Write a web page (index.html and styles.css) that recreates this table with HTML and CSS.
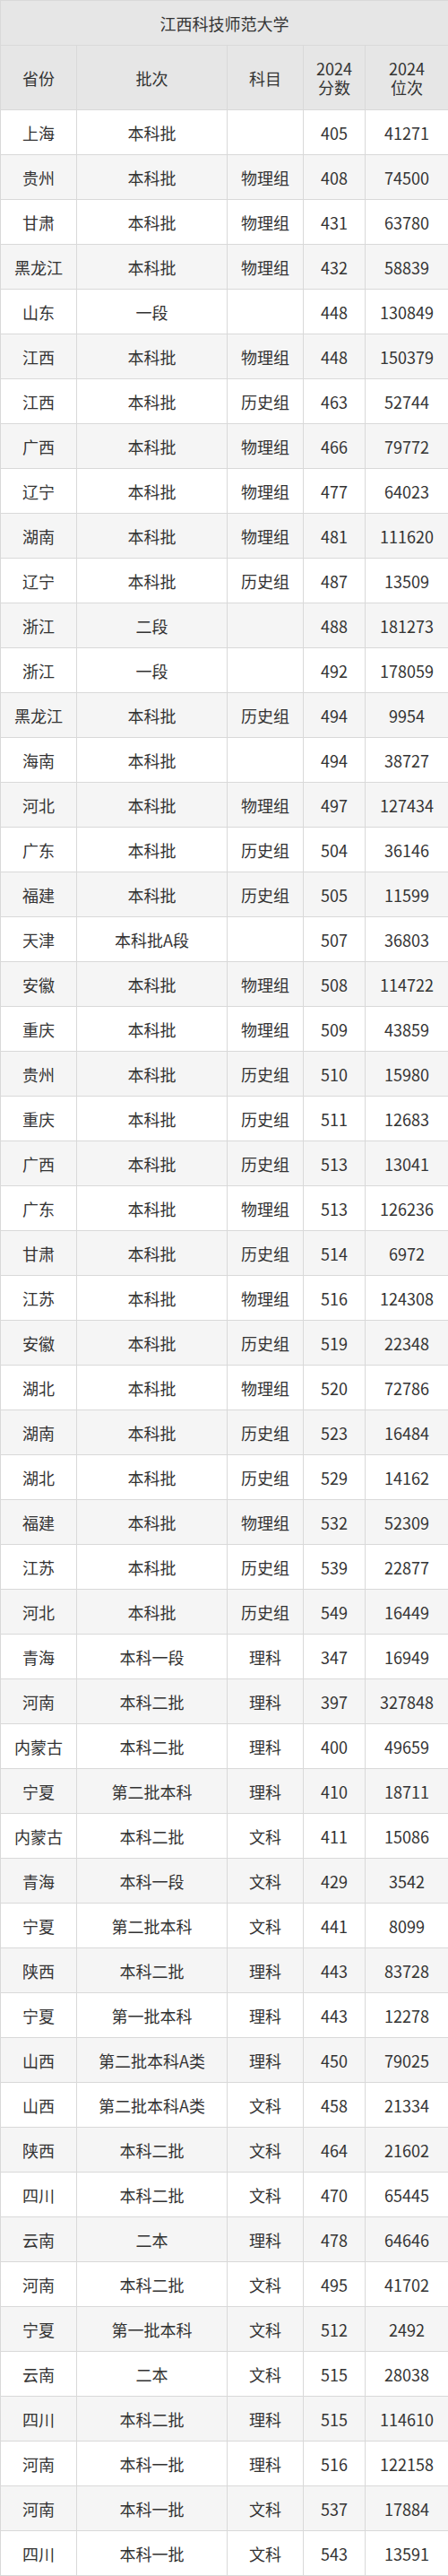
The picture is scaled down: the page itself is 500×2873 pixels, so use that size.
FILE: index.html
```html
<!DOCTYPE html>
<html lang="zh">
<head>
<meta charset="utf-8">
<title>江西科技师范大学</title>
<link rel="stylesheet" href="styles.css">
</head>
<body>
<table class="score-table">
<colgroup>
<col class="c-prov"><col class="c-batch"><col class="c-subj"><col class="c-score"><col class="c-rank">
</colgroup>
<thead>
<tr class="title-row"><th colspan="5">江西科技师范大学</th></tr>
<tr class="head-row"><th>省份</th><th>批次</th><th>科目</th><th><span class="hl">2024</span><span class="hl">分数</span></th><th><span class="hl">2024</span><span class="hl">位次</span></th></tr>
</thead>
<tbody>
<tr><td>上海</td><td>本科批</td><td></td><td>405</td><td>41271</td></tr>
<tr><td>贵州</td><td>本科批</td><td>物理组</td><td>408</td><td>74500</td></tr>
<tr><td>甘肃</td><td>本科批</td><td>物理组</td><td>431</td><td>63780</td></tr>
<tr><td>黑龙江</td><td>本科批</td><td>物理组</td><td>432</td><td>58839</td></tr>
<tr><td>山东</td><td>一段</td><td></td><td>448</td><td>130849</td></tr>
<tr><td>江西</td><td>本科批</td><td>物理组</td><td>448</td><td>150379</td></tr>
<tr><td>江西</td><td>本科批</td><td>历史组</td><td>463</td><td>52744</td></tr>
<tr><td>广西</td><td>本科批</td><td>物理组</td><td>466</td><td>79772</td></tr>
<tr><td>辽宁</td><td>本科批</td><td>物理组</td><td>477</td><td>64023</td></tr>
<tr><td>湖南</td><td>本科批</td><td>物理组</td><td>481</td><td>111620</td></tr>
<tr><td>辽宁</td><td>本科批</td><td>历史组</td><td>487</td><td>13509</td></tr>
<tr><td>浙江</td><td>二段</td><td></td><td>488</td><td>181273</td></tr>
<tr><td>浙江</td><td>一段</td><td></td><td>492</td><td>178059</td></tr>
<tr><td>黑龙江</td><td>本科批</td><td>历史组</td><td>494</td><td>9954</td></tr>
<tr><td>海南</td><td>本科批</td><td></td><td>494</td><td>38727</td></tr>
<tr><td>河北</td><td>本科批</td><td>物理组</td><td>497</td><td>127434</td></tr>
<tr><td>广东</td><td>本科批</td><td>历史组</td><td>504</td><td>36146</td></tr>
<tr><td>福建</td><td>本科批</td><td>历史组</td><td>505</td><td>11599</td></tr>
<tr><td>天津</td><td>本科批A段</td><td></td><td>507</td><td>36803</td></tr>
<tr><td>安徽</td><td>本科批</td><td>物理组</td><td>508</td><td>114722</td></tr>
<tr><td>重庆</td><td>本科批</td><td>物理组</td><td>509</td><td>43859</td></tr>
<tr><td>贵州</td><td>本科批</td><td>历史组</td><td>510</td><td>15980</td></tr>
<tr><td>重庆</td><td>本科批</td><td>历史组</td><td>511</td><td>12683</td></tr>
<tr><td>广西</td><td>本科批</td><td>历史组</td><td>513</td><td>13041</td></tr>
<tr><td>广东</td><td>本科批</td><td>物理组</td><td>513</td><td>126236</td></tr>
<tr><td>甘肃</td><td>本科批</td><td>历史组</td><td>514</td><td>6972</td></tr>
<tr><td>江苏</td><td>本科批</td><td>物理组</td><td>516</td><td>124308</td></tr>
<tr><td>安徽</td><td>本科批</td><td>历史组</td><td>519</td><td>22348</td></tr>
<tr><td>湖北</td><td>本科批</td><td>物理组</td><td>520</td><td>72786</td></tr>
<tr><td>湖南</td><td>本科批</td><td>历史组</td><td>523</td><td>16484</td></tr>
<tr><td>湖北</td><td>本科批</td><td>历史组</td><td>529</td><td>14162</td></tr>
<tr><td>福建</td><td>本科批</td><td>物理组</td><td>532</td><td>52309</td></tr>
<tr><td>江苏</td><td>本科批</td><td>历史组</td><td>539</td><td>22877</td></tr>
<tr><td>河北</td><td>本科批</td><td>历史组</td><td>549</td><td>16449</td></tr>
<tr><td>青海</td><td>本科一段</td><td>理科</td><td>347</td><td>16949</td></tr>
<tr><td>河南</td><td>本科二批</td><td>理科</td><td>397</td><td>327848</td></tr>
<tr><td>内蒙古</td><td>本科二批</td><td>理科</td><td>400</td><td>49659</td></tr>
<tr><td>宁夏</td><td>第二批本科</td><td>理科</td><td>410</td><td>18711</td></tr>
<tr><td>内蒙古</td><td>本科二批</td><td>文科</td><td>411</td><td>15086</td></tr>
<tr><td>青海</td><td>本科一段</td><td>文科</td><td>429</td><td>3542</td></tr>
<tr><td>宁夏</td><td>第二批本科</td><td>文科</td><td>441</td><td>8099</td></tr>
<tr><td>陕西</td><td>本科二批</td><td>理科</td><td>443</td><td>83728</td></tr>
<tr><td>宁夏</td><td>第一批本科</td><td>理科</td><td>443</td><td>12278</td></tr>
<tr><td>山西</td><td>第二批本科A类</td><td>理科</td><td>450</td><td>79025</td></tr>
<tr><td>山西</td><td>第二批本科A类</td><td>文科</td><td>458</td><td>21334</td></tr>
<tr><td>陕西</td><td>本科二批</td><td>文科</td><td>464</td><td>21602</td></tr>
<tr><td>四川</td><td>本科二批</td><td>文科</td><td>470</td><td>65445</td></tr>
<tr><td>云南</td><td>二本</td><td>理科</td><td>478</td><td>64646</td></tr>
<tr><td>河南</td><td>本科二批</td><td>文科</td><td>495</td><td>41702</td></tr>
<tr><td>宁夏</td><td>第一批本科</td><td>文科</td><td>512</td><td>2492</td></tr>
<tr><td>云南</td><td>二本</td><td>文科</td><td>515</td><td>28038</td></tr>
<tr><td>四川</td><td>本科二批</td><td>理科</td><td>515</td><td>114610</td></tr>
<tr><td>河南</td><td>本科一批</td><td>理科</td><td>516</td><td>122158</td></tr>
<tr><td>河南</td><td>本科一批</td><td>文科</td><td>537</td><td>17884</td></tr>
<tr><td>四川</td><td>本科一批</td><td>文科</td><td>543</td><td>13591</td></tr>
</tbody>
</table>
</body>
</html>
```

FILE: styles.css
```css
html, body {
  margin: 0;
  padding: 0;
  background: #ffffff;
}

.score-table {
  width: 500px;
  border-collapse: collapse;
  table-layout: fixed;
  font-family: "Noto Sans CJK SC", "Noto Sans", sans-serif;
  font-size: 18px;
  color: #333333;
}

.c-prov { width: 85px; }
.c-batch { width: 168px; }
.c-subj { width: 85px; }
.c-score { width: 69px; }
.c-rank { width: 93px; }

.score-table th,
.score-table td {
  border: 1px solid #d9d9d9;
  text-align: center;
  vertical-align: middle;
  padding: 0;
  font-weight: normal;
  line-height: 24px;
}

.hl {
  display: block;
  line-height: 21px;
}

.title-row th {
  height: 49px;
  background: #e6e6e6;
}

.head-row th {
  height: 71px;
  background: #e6e6e6;
}

.score-table tbody tr {
  height: 50px;
}

.score-table tbody tr:nth-child(even) {
  background: #f5f5f5;
}
```
